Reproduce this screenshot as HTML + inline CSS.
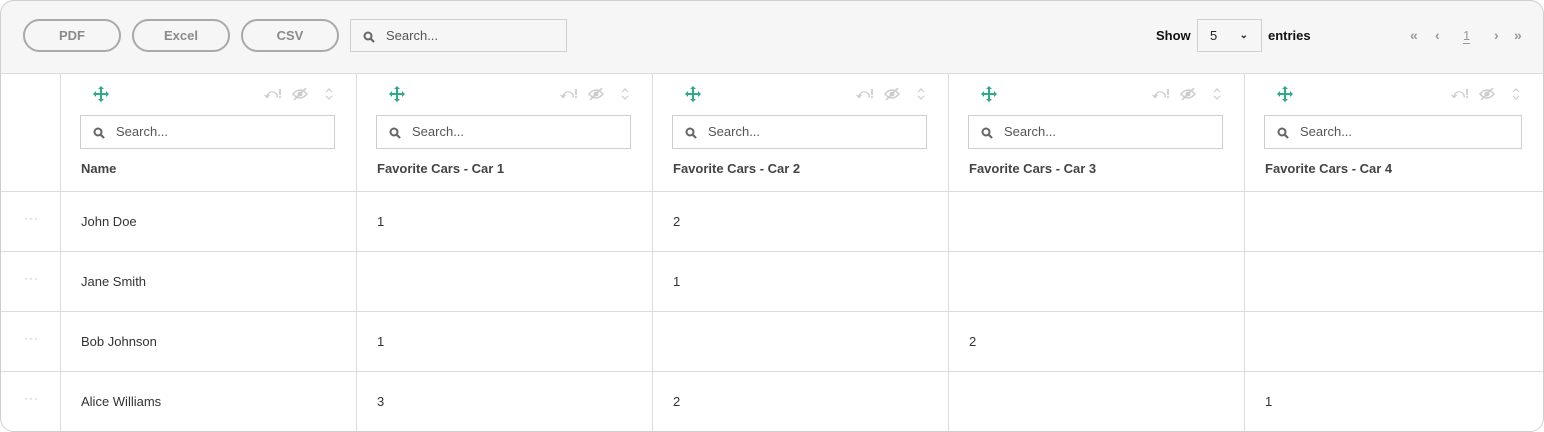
<!DOCTYPE html>
<html><head><style>
*{box-sizing:border-box;margin:0;padding:0}
body{width:1544px;height:432px;background:#fff;font-family:"Liberation Sans",sans-serif;overflow:hidden}
.wrap{position:absolute;left:0;top:0;width:1544px;height:432px;border-radius:14px;overflow:hidden}
.frame{position:absolute;left:0;top:0;width:1544px;height:432px;border:1px solid #cfcfcf;border-radius:14px;z-index:5}
.tb{position:absolute;left:0;top:0;width:100%;height:74px;background:#f6f6f6;border-bottom:1px solid #dcdcdc}
.btn{position:absolute;top:19px;width:98px;height:33px;border:2px solid #a9a9a9;border-radius:17px;font-weight:bold;font-size:13px;color:#8a8a8a;text-align:center;line-height:29px}
.srch{position:absolute;border:1px solid #cfcfcf;background:#fff;height:34px;font-size:13px;color:#555;line-height:32px;padding-left:35px}
.srch svg{position:absolute;left:12px;top:11px}
.gs{background:#f6f6f6}
.vl{position:absolute;top:73px;bottom:0;width:1px;background:#dcdcdc}
.hl{position:absolute;left:0;right:0;height:1px;background:#dcdcdc}
.t{position:absolute;font-size:13px;color:#333}
.h{position:absolute;top:161px;font-size:13px;font-weight:bold;color:#444}
.dots{position:absolute;left:24px;color:#bbb;font-size:12px;letter-spacing:1px}
</style></head><body><div class="frame"></div><div class="wrap">
<div class="tb">
<div class="btn" style="left:23px">PDF</div>
<div class="btn" style="left:132px">Excel</div>
<div class="btn" style="left:241px">CSV</div>
<div class="srch gs" style="left:350px;top:19px;width:217px;height:33px;line-height:31px">
<svg width="12" height="12" viewBox="0 0 12 12"><circle cx="5" cy="5" r="3.5" fill="none" stroke="#666" stroke-width="2"/><path d="M7.5 7.5L11 11" stroke="#666" stroke-width="2.2"/></svg>Search...</div>
<div class="t" style="left:1156px;top:28px;font-weight:bold;color:#111">Show</div>
<div style="position:absolute;left:1197px;top:19px;width:65px;height:33px;border:1px solid #cfcfcf;font-size:13px;line-height:31px;padding-left:12px;color:#222">5<span style="position:absolute;right:13px;top:0;font-size:10px;font-weight:bold">&#8964;</span></div>
<div class="t" style="left:1268px;top:28px;font-weight:bold;color:#111">entries</div>
<div class="t" style="left:1410px;top:27px;color:#999;font-weight:bold;font-size:14px">«</div>
<div class="t" style="left:1435px;top:27px;color:#999;font-weight:bold;font-size:14px">‹</div>
<div class="t" style="left:1463px;top:28px;color:#999;border-bottom:1px solid #999;line-height:15px">1</div>
<div class="t" style="left:1494px;top:27px;color:#999;font-weight:bold;font-size:14px">›</div>
<div class="t" style="left:1514px;top:27px;color:#999;font-weight:bold;font-size:14px">»</div>
</div>
<div class="vl" style="left:60px"></div><div class="vl" style="left:356px"></div><div class="vl" style="left:652px"></div><div class="vl" style="left:948px"></div><div class="vl" style="left:1244px"></div>
<div class="hl" style="top:191px"></div><div class="hl" style="top:251px"></div><div class="hl" style="top:311px"></div><div class="hl" style="top:371px"></div>
<div id="hdr"></div>
<script>
var xs=[60,356,652,948,1244],names=["Name","Favorite Cars - Car 1","Favorite Cars - Car 2","Favorite Cars - Car 3","Favorite Cars - Car 4"],h="";
for(var i=0;i<5;i++){var x=xs[i],w=(i==4?299:296);
h+='<svg style="position:absolute;left:'+(x+33)+'px;top:86px" width="16" height="16" viewBox="0 0 16 16"><path d="M8 1v14M1 8h14" stroke="#2eaa87" stroke-width="2"/><path d="M8 0l-3 3h6zM8 16l-3-3h6zM0 8l3-3v6zM16 8l-3-3v6z" fill="#2eaa87"/></svg>';
var r=x+w;
h+='<div style="position:absolute;left:'+(r-92)+'px;top:86px;color:#ccc;font-size:13px;font-weight:bold">⤺!</div>';
h+='<svg style="position:absolute;left:'+(r-64)+'px;top:88px" width="16" height="12" viewBox="0 0 16 12"><path d="M1 6Q8 -2 15 6Q8 14 1 6Z" fill="none" stroke="#ccc" stroke-width="1.5"/><circle cx="8" cy="6" r="2.5" fill="#ccc"/><path d="M2 12L14 0" stroke="#ccc" stroke-width="1.5"/></svg>';
h+='<svg style="position:absolute;left:'+(r-31)+'px;top:87px" width="8" height="14" viewBox="0 0 8 14"><path d="M1 5l3-3 3 3M1 9l3 3 3-3" fill="none" stroke="#ccc" stroke-width="1.2"/></svg>';
h+='<div class="srch" style="left:'+(x+20)+'px;top:115px;width:'+(i==4?258:255)+'px"><svg width="12" height="12" viewBox="0 0 12 12"><circle cx="5" cy="5" r="3.5" fill="none" stroke="#666" stroke-width="2"/><path d="M7.5 7.5L11 11" stroke="#666" stroke-width="2.2"/></svg>Search...</div>';
h+='<div class="h" style="left:'+(x+21)+'px">'+names[i]+'</div>';}
var rows=[["John Doe","1","2","",""],["Jane Smith","","1","",""],["Bob Johnson","1","","2",""],["Alice Williams","3","2","","1"]];
for(var j=0;j<4;j++){var y=191+j*60;h+='<div class="dots" style="top:'+(y+20)+'px">···</div>';
for(var i=0;i<5;i++)h+='<div class="t" style="left:'+(xs[i]+21)+'px;top:'+(y+23)+'px">'+rows[j][i]+'</div>';}
document.getElementById("hdr").innerHTML=h;
</script>
</div></body></html>
